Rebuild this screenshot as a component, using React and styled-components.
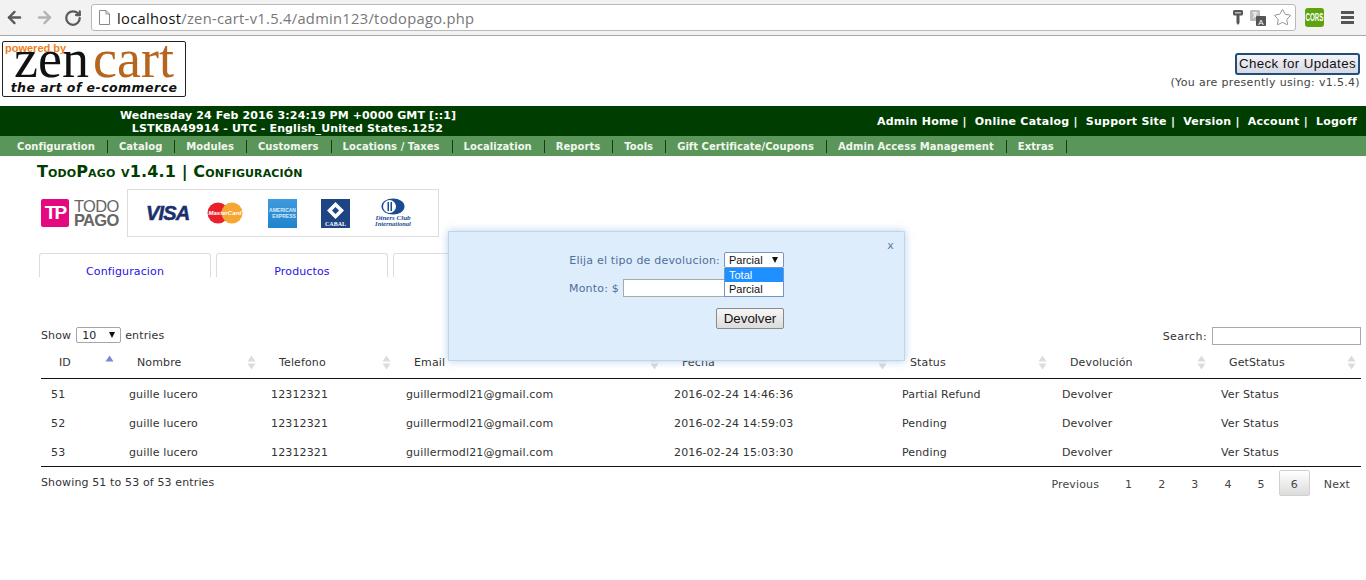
import { createGlobalStyle } from 'styled-components';
import styled from 'styled-components';
import { ArrowLeft, ArrowRight, RotateCw, Star } from 'lucide-react';

const Global = createGlobalStyle`
  html, body { margin: 0; padding: 0; background: #fff; }
  body { font-family: 'DejaVu Sans', Verdana, sans-serif; font-size: 11px; letter-spacing: 0.13px; color: #333; overflow: hidden; }
`;

const Page = styled.div`
  position: relative;
  width: 1366px;
  height: 580px;
  overflow: hidden;
`;

const BrowserBar = styled.div`
  height: 36px;
  box-sizing: border-box;
  background: #f2f2f2;
  border-bottom: 1px solid #a8a8a8;
  display: flex;
  align-items: center;
  padding: 0 8px 0 5px;
`;

const NavButton = styled.div`
  width: 29.5px;
  display: flex;
  color: ${(p) => (p.$off ? '#b4b4b4' : '#5a5a5a')};
`;

const AddressBar = styled.div`
  margin-left: -2.5px;
  width: 1205px;
  height: 27px;
  box-sizing: border-box;
  background: #fff;
  border: 1px solid #b9b9b9;
  border-radius: 3px;
  display: flex;
  align-items: center;
  padding: 0 3px 0 7px;
  font-family: 'Open Sans', sans-serif;
  font-size: 14.7px;
  letter-spacing: 0.3px;
  color: #777;
  gap: 7px;
`;

const Url = styled.div`
  flex: 1;
  b { font-weight: 400; color: #111; }
`;

const BarIcon = styled.svg`
  display: block;
  flex: none;
`;

const CorsBadge = styled.div`
  margin-left: 9px;
  width: 19px;
  height: 19px;
  border-radius: 3px;
  background: #5ea30e;
  color: #fff;
  font: bold 10px 'Liberation Sans', sans-serif;
  letter-spacing: 0;
  display: flex;
  align-items: center;
  justify-content: center;
  overflow: hidden;
  span { display: block; transform: scaleX(0.62); }
`;

const MenuIcon = styled.div`
  margin-left: 17px;
  width: 13px;
  display: grid;
  gap: 2px;
  span { display: block; height: 3px; background: #555; }
`;

const Header = styled.div`
  height: 70px;
  display: flex;
  justify-content: space-between;
  padding: 5px 6px 0 2px;
  box-sizing: border-box;
`;

const ZenLogo = styled.div`
  position: relative;
  width: 184px;
  height: 56px;
  box-sizing: border-box;
  border: 1px solid #222;
  border-radius: 2px;
  overflow: hidden;
  background: #fff;
`;

const ZenWord = styled.div`
  height: 39px;
  display: flex;
  justify-content: center;
  font-family: 'Liberation Serif', serif;
  font-size: 54px;
  line-height: 34px;
  letter-spacing: 0;
  color: #111;
  span { color: #b5651d; margin-left: 4px; }
`;

const PoweredBy = styled.div`
  position: absolute;
  left: 2px;
  top: 0;
  font: bold 11px 'Liberation Sans', sans-serif;
  letter-spacing: 0;
  color: #ee7f22;
  z-index: 1;
`;

const ZenTag = styled.div`
  text-align: center;
  font: italic bold 12.5px 'DejaVu Sans', sans-serif;
  letter-spacing: 0.45px;
  color: #111;
  line-height: 14px;
`;

const UpdateBox = styled.div`
  text-align: right;
  padding-top: 12px;
`;

const UpdateButton = styled.div`
  display: inline-block;
  width: 125px;
  height: 22px;
  box-sizing: border-box;
  border: 2px solid #1d4f7c;
  border-radius: 3px;
  background: linear-gradient(#f4f4f8, #d8d8e4);
  color: #111;
  font: 13.33px/18px 'Liberation Sans', sans-serif;
  letter-spacing: 0.4px;
  text-align: center;
  white-space: nowrap;
`;

const UpdateNote = styled.div`
  margin-top: 1px;
  font-size: 11px;
  letter-spacing: 0.33px;
  line-height: 13px;
  color: #444;
`;

const TopBar = styled.div`
  height: 30px;
  background: #003d00;
  color: #fff;
  font-weight: bold;
  display: flex;
  justify-content: space-between;
  align-items: center;
  box-sizing: border-box;
  padding: 0 9px 0 120px;
`;

const ServerInfo = styled.div`
  width: 335px;
  flex: none;
  padding-top: 1px;
  text-align: center;
  line-height: 13px;
  white-space: nowrap;
`;

const TopLinks = styled.div`
  display: flex;
  gap: 8px;
  padding-top: 1px;
  letter-spacing: 0.25px;
  white-space: nowrap;
`;

const Menu = styled.div`
  height: 20px;
  background: #5a965a;
  display: flex;
  align-items: center;
  padding-left: 5px;
`;

const MenuItem = styled.div`
  height: 13px;
  line-height: 13px;
  padding: 0 12px 0 11px;
  border-right: 1px solid #123f12;
  color: #f2f6ee;
  font-size: 10px;
  font-weight: bold;
  letter-spacing: 0.05px;
  white-space: nowrap;
  &:first-child { padding-left: 12px; }
`;

const Content = styled.div`
  padding: 0 5px 0 41px;
`;

const Title = styled.h1`
  margin: 6px 0 0 -4px;
  font-size: 16px;
  line-height: 19px;
  font-weight: bold;
  font-variant: small-caps;
  color: #003d00;
`;

const LogoRow = styled.div`
  margin-top: 8px;
  display: flex;
  align-items: center;
  gap: 8px;
`;

const TodoBrand = styled.div`
  width: 78px;
  display: flex;
  align-items: center;
  gap: 5px;
`;

const TodoMark = styled.div`
  width: 28px;
  height: 28px;
  border-radius: 2px;
  background: #e5097f;
  color: #fff;
  font: bold 19px/28px 'Liberation Sans', sans-serif;
  text-align: center;
  letter-spacing: -2px;
`;

const TodoWord = styled.div`
  font: 16.5px/14px 'Liberation Sans', sans-serif;
  color: #666;
  letter-spacing: -0.7px;
  b { display: block; }
`;

const CardBox = styled.div`
  width: 312px;
  height: 48px;
  box-sizing: border-box;
  border: 1px solid #ddd;
  display: flex;
  align-items: center;
  padding: 0 0 0 18px;
`;

const CardSlot = styled.div`
  width: ${(p) => p.$w}px;
  flex: none;
  display: flex;
`;

const Tabs = styled.div`
  margin-top: 16px;
  margin-left: -2px;
  display: flex;
  gap: 5px;
`;

const Tab = styled.div`
  width: 172px;
  height: 24px;
  box-sizing: border-box;
  border: 1px solid #ddd;
  border-bottom: none;
  border-radius: 3px 3px 0 0;
  text-align: center;
  padding-top: 11px;
  line-height: 13px;
  color: #2a0fe8;
`;

const Controls = styled.div`
  margin-top: 50px;
  height: 19px;
  display: flex;
  justify-content: space-between;
  align-items: flex-start;
`;

const ControlGroup = styled.div`
  display: flex;
  align-items: center;
  gap: 5px;
`;

const SearchLabel = styled.span`
  letter-spacing: 0.4px;
`;

const SelectBox = styled.div`
  width: 45px;
  height: 16px;
  box-sizing: border-box;
  border: 1px solid #a6a6a6;
  border-radius: 2px;
  display: flex;
  justify-content: space-between;
  align-items: center;
  padding: 0 5px;
  font-size: 11px;
  color: #222;
`;

const EntriesLabel = styled.span`
  margin-left: -1px;
`;

const Caret = styled.span`
  width: 0;
  height: 0;
  border-left: 3.5px solid transparent;
  border-right: 3.5px solid transparent;
  border-top: 6px solid #111;
`;

const SearchInput = styled.div`
  width: 149px;
  height: 18px;
  box-sizing: border-box;
  border: 1px solid #a9a9a9;
`;

const Table = styled.table`
  width: 1320px;
  table-layout: fixed;
  border-collapse: separate;
  border-spacing: 0;
`;

const Th = styled.th`
  height: 33px;
  padding: 0 5px 0 18px;
  box-sizing: border-box;
  font-weight: normal;
  text-align: left;
  border-bottom: 1px solid #111;
`;

const ThInner = styled.div`
  display: flex;
  justify-content: space-between;
  align-items: center;
`;

const Td = styled.td`
  height: 29px;
  padding: 1px 10px 0;
  box-sizing: border-box;
  white-space: nowrap;
`;

const BodyRow = styled.tr`
  &:last-child td { height: 30px; border-bottom: 1px solid #111; }
`;

const Footer = styled.div`
  display: flex;
  justify-content: space-between;
  align-items: flex-start;
`;

const Info = styled.div`
  padding-top: 9px;
`;

const Pager = styled.div`
  display: flex;
  gap: 2px;
  margin-top: 3px;
  margin-right: -1px;
`;

const PageLink = styled.div`
  height: 26px;
  box-sizing: border-box;
  padding: 1px 11px 0;
  line-height: 25px;
  color: #444;
  border: 1px solid ${(p) => (p.$current ? '#d0d0d0' : 'transparent')};
  border-radius: 2px;
  background: ${(p) => (p.$current ? 'linear-gradient(#fff, #dcdcdc)' : 'none')};
`;

const Modal = styled.div`
  position: absolute;
  left: 448px;
  top: 231px;
  width: 457px;
  height: 130px;
  box-sizing: border-box;
  background: #deedfb;
  border: 1px solid #bcd6ee;
  box-shadow: 0 0 8px rgba(120, 170, 220, 0.55);
  color: #4f6f9c;
  letter-spacing: 0.2px;
  padding-top: 20px;
`;

const CloseX = styled.div`
  position: absolute;
  right: 10px;
  top: 7px;
  font-size: 11px;
  color: #5a7ba5;
`;

const ModalRow = styled.div`
  display: flex;
  align-items: center;
  justify-content: flex-end;
  padding-right: 120px;
  margin-bottom: ${(p) => p.$mb || 0}px;
  gap: 4px;
`;

const DropWrap = styled.div`
  position: relative;
`;

const ModalSelect = styled.div`
  width: 60px;
  height: 16px;
  box-sizing: border-box;
  background: #fff;
  border: 1px solid #7394c8;
  border-radius: 2px;
  display: flex;
  align-items: center;
  justify-content: space-between;
  padding: 0 5px 0 4px;
  font: 11px 'Liberation Sans', sans-serif;
  letter-spacing: 0;
  color: #111;
`;

const DropList = styled.div`
  position: absolute;
  left: 0;
  top: 16px;
  width: 60px;
  box-sizing: border-box;
  background: #fff;
  border: 1px solid #7394c8;
  border-top: none;
  font: 11px/14px 'Liberation Sans', sans-serif;
  letter-spacing: 0;
  color: #111;
`;

const DropOption = styled.div`
  padding-left: 4px;
  background: ${(p) => (p.$on ? '#1e90ff' : '#fff')};
  color: ${(p) => (p.$on ? '#fff' : '#111')};
`;

const AmountInput = styled.div`
  width: 161px;
  height: 18px;
  box-sizing: border-box;
  background: #fff;
  border: 1px solid #a9a9a9;
`;

const ReturnButton = styled.div`
  width: 68px;
  height: 21px;
  box-sizing: border-box;
  border: 1px solid #8a8a8a;
  border-radius: 2px;
  background: linear-gradient(#f6f6f6, #dcdcdc);
  font: 13.33px/19px 'Liberation Sans', sans-serif;
  letter-spacing: 0;
  color: #111;
  text-align: center;
`;

const SortIcon = ({ active }) => (
  <BarIcon width="9" height="15" viewBox="0 0 9 15">
    {active ? (
      <path d="M0.5 6.5 L4.5 0.5 L8.5 6.5 Z" fill="#7b85d8" />
    ) : (
      <>
        <path d="M0.5 6.5 L4.5 0.5 L8.5 6.5 Z" fill="#dcdcdc" />
        <path d="M0.5 8.5 L4.5 14.5 L8.5 8.5 Z" fill="#dcdcdc" />
      </>
    )}
  </BarIcon>
);

const PageIcon = () => (
  <BarIcon width="11" height="15" viewBox="0 0 11 15">
    <path d="M0.5 0.5 H7 L10.5 4 V14.5 H0.5 Z M7 0.5 V4 H10.5" fill="#fff" stroke="#8a8a8a" />
  </BarIcon>
);

const KeyIcon = () => (
  <BarIcon width="10" height="15" viewBox="0 0 10 15">
    <path d="M1.5 0 H8.5 Q10 0 10 1.5 V4 Q10 5.5 8.5 5.5 H6.5 V13 L5 15 L3.5 13 V5.5 H1.5 Q0 5.5 0 4 V1.5 Q0 0 1.5 0 Z" fill="#555" />
    <rect x="2" y="2" width="6" height="1.5" fill="#bbb" />
  </BarIcon>
);

const TranslateIcon = () => (
  <BarIcon width="16" height="16" viewBox="0 0 16 16">
    <rect x="0" y="0" width="10" height="11" rx="1" fill="#bdbdbd" />
    <path d="M2.5 3 H7.5 M5 2 V3 M3 8 L6.5 3.5 M3.5 4 L7 8" stroke="#fff" strokeWidth="1" fill="none" />
    <rect x="6" y="6" width="10" height="10" rx="1" fill="#555" />
    <text x="11" y="14.5" textAnchor="middle" fontFamily="Liberation Sans" fontSize="8" fill="#fff">A</text>
  </BarIcon>
);

const VisaLogo = () => (
  <BarIcon width="44" height="18" viewBox="0 0 44 18">
    <text x="0" y="16" fontFamily="Liberation Sans" fontSize="20" fontWeight="bold" fontStyle="italic" fill="#1a2f6d" stroke="#1a2f6d" strokeWidth="0.5" letterSpacing="-0.8">VISA</text>
  </BarIcon>
);

const MasterLogo = () => (
  <BarIcon width="36" height="22" viewBox="0 0 36 22">
    <circle cx="11" cy="11" r="10.5" fill="#e8212b" />
    <circle cx="25" cy="11" r="10.5" fill="#f6a733" />
    <text x="18" y="13" textAnchor="middle" fontFamily="Liberation Sans" fontSize="6" fontWeight="bold" fontStyle="italic" letterSpacing="0" fill="#fff">MasterCard</text>
  </BarIcon>
);

const AmexLogo = () => (
  <BarIcon width="29" height="29" viewBox="0 0 29 29">
    <defs>
      <linearGradient id="amex" x1="0" y1="0" x2="0" y2="1">
        <stop offset="0" stopColor="#3f9ade" />
        <stop offset="1" stopColor="#1f84cc" />
      </linearGradient>
    </defs>
    <rect width="29" height="29" fill="url(#amex)" />
    <text x="14.5" y="13" textAnchor="middle" fontFamily="Liberation Sans" fontSize="5" fontWeight="bold" letterSpacing="0" fill="#d9ecf8">AMERICAN</text>
    <text x="16" y="19" textAnchor="middle" fontFamily="Liberation Sans" fontSize="5" fontWeight="bold" letterSpacing="0" fill="#d9ecf8">EXPRESS</text>
  </BarIcon>
);

const CabalLogo = () => (
  <BarIcon width="29" height="29" viewBox="0 0 29 29">
    <rect width="29" height="29" fill="#1d4483" />
    <path d="M14.5 3 L23 11.5 L14.5 20 L6 11.5 Z M14.5 8 L11 11.5 L14.5 15 L18 11.5 Z" fill="#fff" fillRule="evenodd" />
    <text x="14.5" y="27" textAnchor="middle" fontFamily="Liberation Serif" fontSize="6" fontWeight="bold" letterSpacing="0" fill="#fff">CABAL</text>
  </BarIcon>
);

const DinersLogo = () => (
  <BarIcon width="38" height="30" viewBox="0 0 38 30">
    <ellipse cx="19" cy="8.5" rx="11.5" ry="8" fill="#1b4a94" />
    <circle cx="15.5" cy="8.5" r="6.5" fill="#fff" />
    <rect x="13.5" y="4" width="1.5" height="9" fill="#1b4a94" />
    <rect x="16.5" y="4" width="1.5" height="9" fill="#1b4a94" />
    <text x="19" y="22" textAnchor="middle" fontFamily="Liberation Serif" fontSize="7" fontStyle="italic" fontWeight="bold" letterSpacing="0" fill="#1b4a94">Diners Club</text>
    <text x="19" y="28" textAnchor="middle" fontFamily="Liberation Serif" fontSize="6.5" fontStyle="italic" fontWeight="bold" letterSpacing="0" fill="#1b4a94">International</text>
  </BarIcon>
);

const menuItems = ['Configuration', 'Catalog', 'Modules', 'Customers', 'Locations / Taxes', 'Localization', 'Reports', 'Tools', 'Gift Certificate/Coupons', 'Admin Access Management', 'Extras'];

const columns = [
  ['ID', 78],
  ['Nombre', 142],
  ['Telefono', 135],
  ['Email', 268],
  ['Fecha', 228],
  ['Status', 160],
  ['Devolución', 159],
  ['GetStatus', 150],
];

const rows = [
  ['51', '2016-02-24 14:46:36', 'Partial Refund'],
  ['52', '2016-02-24 14:59:03', 'Pending'],
  ['53', '2016-02-24 15:03:30', 'Pending'],
];

const App = () => (
  <Page>
    <Global />
    <BrowserBar>
      <NavButton><ArrowLeft size={19} strokeWidth={3} /></NavButton>
      <NavButton $off><ArrowRight size={19} strokeWidth={3} /></NavButton>
      <NavButton><RotateCw size={18} strokeWidth={3} /></NavButton>
      <AddressBar>
        <PageIcon />
        <Url><b>localhost</b>/zen-cart-v1.5.4/admin123/todopago.php</Url>
        <KeyIcon />
        <TranslateIcon />
        <Star size={19} strokeWidth={1} color="#777" />
      </AddressBar>
      <CorsBadge><span>CORS</span></CorsBadge>
      <MenuIcon><span /><span /><span /></MenuIcon>
    </BrowserBar>

    <Header>
      <ZenLogo>
        <PoweredBy>powered by</PoweredBy>
        <ZenWord>zen<span>cart</span></ZenWord>
        <ZenTag>the art of e-commerce</ZenTag>
      </ZenLogo>
      <UpdateBox>
        <UpdateButton>Check for Updates</UpdateButton>
        <UpdateNote>(You are presently using: v1.5.4)</UpdateNote>
      </UpdateBox>
    </Header>

    <TopBar>
      <ServerInfo>
        Wednesday 24 Feb 2016 3:24:19 PM +0000 GMT [::1]<br />
        LSTKBA49914 - UTC - English_United States.1252
      </ServerInfo>
      <TopLinks>
        <span>Admin Home |</span>
        <span>Online Catalog |</span>
        <span>Support Site |</span>
        <span>Version |</span>
        <span>Account |</span>
        <span>Logoff</span>
      </TopLinks>
    </TopBar>
    <Menu>
      {menuItems.map((m) => <MenuItem key={m}>{m}</MenuItem>)}
    </Menu>

    <Content>
      <Title>TodoPago v1.4.1 | Configuración</Title>
      <LogoRow>
        <TodoBrand>
          <TodoMark>TP</TodoMark>
          <TodoWord>TODO<b>PAGO</b></TodoWord>
        </TodoBrand>
        <CardBox>
          <CardSlot $w={61}><VisaLogo /></CardSlot>
          <CardSlot $w={61}><MasterLogo /></CardSlot>
          <CardSlot $w={53}><AmexLogo /></CardSlot>
          <CardSlot $w={53}><CabalLogo /></CardSlot>
          <CardSlot $w={40}><DinersLogo /></CardSlot>
        </CardBox>
      </LogoRow>
      <Tabs>
        <Tab>Configuracion</Tab>
        <Tab>Productos</Tab>
        <Tab />
      </Tabs>
      <Controls>
        <ControlGroup>
          Show
          <SelectBox>10 <Caret /></SelectBox>
          <EntriesLabel>entries</EntriesLabel>
        </ControlGroup>
        <ControlGroup>
          <SearchLabel>Search:</SearchLabel>
          <SearchInput />
        </ControlGroup>
      </Controls>
      <Table>
        <colgroup>
          {columns.map(([name, width]) => <col key={name} width={width} />)}
        </colgroup>
        <thead>
          <tr>
            {columns.map(([name], i) => (
              <Th key={name}>
                <ThInner>
                  {name}
                  <SortIcon active={i === 0} />
                </ThInner>
              </Th>
            ))}
          </tr>
        </thead>
        <tbody>
          {rows.map(([id, date, status]) => (
            <BodyRow key={id}>
              <Td>{id}</Td>
              <Td>guille lucero</Td>
              <Td>12312321</Td>
              <Td>guillermodl21@gmail.com</Td>
              <Td>{date}</Td>
              <Td>{status}</Td>
              <Td>Devolver</Td>
              <Td>Ver Status</Td>
            </BodyRow>
          ))}
        </tbody>
      </Table>
      <Footer>
        <Info>Showing 51 to 53 of 53 entries</Info>
        <Pager>
          <PageLink>Previous</PageLink>
          {[1, 2, 3, 4, 5].map((n) => <PageLink key={n}>{n}</PageLink>)}
          <PageLink $current>6</PageLink>
          <PageLink>Next</PageLink>
        </Pager>
      </Footer>
    </Content>

    <Modal>
      <CloseX>x</CloseX>
      <ModalRow $mb={11}>
        Elija el tipo de devolucion:
        <DropWrap>
          <ModalSelect>Parcial <Caret /></ModalSelect>
          <DropList>
            <DropOption $on>Total</DropOption>
            <DropOption>Parcial</DropOption>
          </DropList>
        </DropWrap>
      </ModalRow>
      <ModalRow $mb={11}>
        Monto: $
        <AmountInput />
      </ModalRow>
      <ModalRow>
        <ReturnButton>Devolver</ReturnButton>
      </ModalRow>
    </Modal>
  </Page>
);

export default App;
